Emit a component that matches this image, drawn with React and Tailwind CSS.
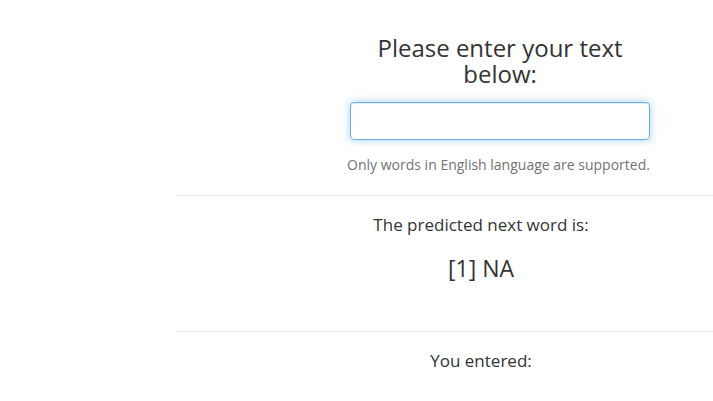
export default function App() {
  return (
    <div className="w-[713px] h-[401px] overflow-hidden bg-white text-[#333] font-['Open_Sans',sans-serif]">
      <div className="ml-[175px] w-[612px]">
        {/* input block */}
        <div className="ml-[175px] w-[300px] pt-[35px]">
          <h3 className="text-center text-[24px] leading-[1.1] font-normal">
            Please enter your text below:
          </h3>
          <input
            type="text"
            className="mt-[14px] block w-[300px] h-[38px] rounded-[4px] border border-[#66afe9] px-3 outline-none shadow-[inset_0_1px_1px_rgba(0,0,0,0.075),0_0_8px_rgba(102,175,233,0.6)]"
          />
          <p className="mt-[15px] text-center text-[14px] leading-[20px] whitespace-nowrap -ml-[3px] text-[#737373]">
            Only words in English language are supported.
          </p>
        </div>

        <hr className="mt-[20px] border-0 border-t border-[#eee] w-[700px]" />

        <div className="text-center">
          <p className="mt-[20px] text-[17px] leading-[1.1]">The predicted next word is:</p>
          <p className="mt-[22px] text-[23px] leading-[1.1]">[1] NA</p>
        </div>

        <hr className="mt-[49px] border-0 border-t border-[#eee] w-[700px]" />

        <div className="text-center">
          <p className="mt-[20px] text-[17px] leading-[1.1]">You entered:</p>
        </div>
      </div>
    </div>
  );
}
